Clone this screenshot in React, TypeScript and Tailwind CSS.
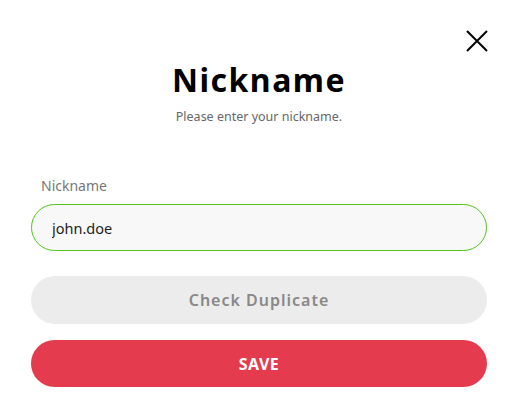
import React from "react";

export default function App() {
  return (
    <div className="w-[518px] h-[419px] bg-white relative" style={{ fontFamily: '"Noto Sans", "Open Sans", sans-serif' }}>
      <button className="absolute right-[30px] top-[30px] w-[22px] h-[22px] text-black">
        <svg viewBox="0 0 22 22" className="w-[22px] h-[22px]" fill="none" stroke="currentColor" strokeWidth="2">
          <path d="M1 1L21 21M21 1L1 21" />
        </svg>
      </button>
      <div className="px-[31px] pt-[60px] flex flex-col">
        <h1 className="text-center text-[32px] leading-[40px] font-bold tracking-[1.5px] text-black">Nickname</h1>
        <p className="text-center text-[12.5px] leading-[16px] text-[#666] mt-[9px]">Please enter your nickname.</p>
        <label className="mt-[52px] ml-[10px] text-[14px] leading-[18px] text-[#777]">Nickname</label>
        <input
          defaultValue="john.doe"
          className="mt-[9px] h-[47px] rounded-full border border-[#52c41a] bg-[#f8f8f8] px-[20px] text-[14.5px] text-[#222] outline-none"
        />
        <button className="mt-[25px] h-[48px] rounded-full bg-[#ececec] text-[16px] font-semibold tracking-[1px] text-[#888]">
          Check Duplicate
        </button>
        <button className="mt-[16px] h-[47px] rounded-full bg-[#e43b4e] text-[16px] font-bold tracking-[0.5px] text-white">
          SAVE
        </button>
      </div>
    </div>
  );
}
